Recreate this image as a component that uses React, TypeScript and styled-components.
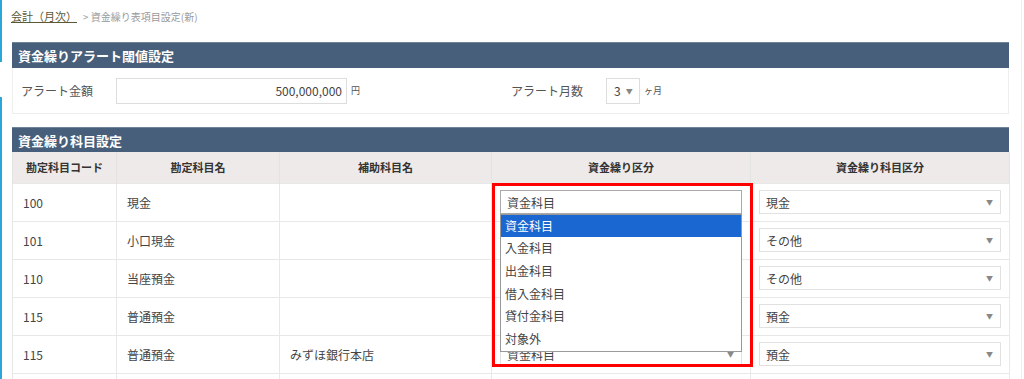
import React from "react";
import styled, { createGlobalStyle } from "styled-components";

const Global = createGlobalStyle`
  html, body { margin: 0; padding: 0; background: #fff; }
  body {
    font-family: "Noto Sans CJK JP", "Noto Sans", sans-serif;
    color: #444;
    font-size: 12px;
  }
  * { box-sizing: border-box; }
`;

const Page = styled.div`
  display: flex;
  width: 1024px;
  height: 379px;
  overflow: hidden;
`;

const Rail = styled.div`
  width: 2px;
  display: flex;
  flex-direction: column;
  flex: none;
`;

const RailSeg = styled.div<{ $h: number; $on: boolean }>`
  height: ${(p) => p.$h}px;
  background: ${(p) => (p.$on ? "#2aa6d8" : "transparent")};
`;

const Main = styled.div`
  width: 1007px;
  padding-left: 10px;
  flex: none;
`;

const Edge = styled.div`
  width: 13px;
  flex: none;
  border-right: 1px solid #eeeeee;
  margin-right: 2px;
`;

const Breadcrumb = styled.div`
  height: 42px;
  padding-top: 8px;
  font-size: 10px;
  color: #9a9a9a;
  display: flex;
  gap: 6px;
  align-items: baseline;
`;

const Crumb = styled.a`
  color: #5b5836;
  font-size: 11px;
  text-decoration: underline;
  margin-left: -1px;
`;

const Panel = styled.section<{ $mb?: number }>`
  width: 997px;
  margin-bottom: ${(p) => p.$mb ?? 0}px;
`;

const PanelHead = styled.div<{ $h: number }>`
  height: ${(p) => p.$h}px;
  background: #475f7a;
  border-top: 1px solid #6f8399;
  color: #fff;
  font-weight: bold;
  font-size: 13px;
  display: flex;
  align-items: center;
  padding-left: 6px;
`;

const PanelBody = styled.div`
  height: 46px;
  border: 1px solid #eeeeee;
  border-top: none;
  display: flex;
  align-items: center;
`;

const FieldLabel = styled.span<{ $w: number; $ml: number }>`
  width: ${(p) => p.$w}px;
  margin-left: ${(p) => p.$ml}px;
  font-size: 12px;
  color: #555;
  flex: none;
`;

const AmountInput = styled.div`
  width: 231px;
  height: 26px;
  border: 1px solid #dddddd;
  text-align: right;
  padding-right: 4px;
  line-height: 24px;
  font-size: 12px;
  color: #444;
  flex: none;
`;

const Unit = styled.span<{ $w?: number }>`
  font-size: 9px;
  color: #555;
  margin-left: 4px;
  width: ${(p) => (p.$w ? `${p.$w}px` : "auto")};
  flex: none;
`;

const MonthSelect = styled.div`
  width: 34px;
  height: 26px;
  border: 1px solid #dddddd;
  display: flex;
  align-items: center;
  padding-left: 7px;
  gap: 5px;
  font-size: 12px;
  color: #444;
  flex: none;
`;

const Arrow = styled.span`
  font-size: 7px;
  color: #888;
`;

const TableWrap = styled.div`
  position: relative;
`;

const Table = styled.table`
  width: 997px;
  border-collapse: collapse;
  table-layout: fixed;
`;

const Th = styled.th`
  height: 31px;
  background: #eeeae9;
  font-size: 11px;
  font-weight: bold;
  color: #333;
  border-left: 1px solid #e3e3e3;
  border-right: 1px solid #e3e3e3;
  text-align: center;
  padding: 0;
`;

const Td = styled.td`
  height: 38px;
  border: 1px solid #e8e8e8;
  padding: 0 10px;
  font-size: 12px;
  color: #444;
  white-space: nowrap;
  position: relative;
`;

const SelCell = styled.td`
  height: 38px;
  border: 1px solid #e8e8e8;
  padding: 0 8px;
  position: relative;
`;

const Select = styled.div<{ $open?: boolean }>`
  height: 24px;
  border: 1px solid ${(p) => (p.$open ? "#a9a9a9" : "#e1e1e1")};
  display: flex;
  align-items: center;
  justify-content: space-between;
  padding: 0 7px 0 6px;
  font-size: 12px;
  color: #444;
  background: #fff;
`;

const ListBox = styled.ul`
  position: absolute;
  left: 8px;
  right: 8px;
  top: 30px;
  margin: 0;
  padding: 0;
  list-style: none;
  border: 1px solid #999;
  background: #fff;
  z-index: 2;
`;

const Option = styled.li<{ $active?: boolean }>`
  height: 22.7px;
  line-height: 22.7px;
  padding-left: 4px;
  font-size: 12px;
  color: ${(p) => (p.$active ? "#fff" : "#444")};
  background: ${(p) => (p.$active ? "#1b67d1" : "#fff")};
`;

const Highlight = styled.div`
  position: absolute;
  left: 0;
  top: -1px;
  width: 261px;
  height: 184px;
  border: 3px solid #ff0000;
  z-index: 3;
  pointer-events: none;
`;

type Row = { code: string; name: string; sub: string; kind: string; cat: string };

const rows: Row[] = [
  { code: "100", name: "現金", sub: "", kind: "資金科目", cat: "現金" },
  { code: "101", name: "小口現金", sub: "", kind: "資金科目", cat: "その他" },
  { code: "110", name: "当座預金", sub: "", kind: "資金科目", cat: "その他" },
  { code: "115", name: "普通預金", sub: "", kind: "資金科目", cat: "預金" },
  { code: "115", name: "普通預金", sub: "みずほ銀行本店", kind: "資金科目", cat: "預金" },
  { code: "", name: "", sub: "", kind: "", cat: "" },
];

const options = ["資金科目", "入金科目", "出金科目", "借入金科目", "貸付金科目", "対象外"];

export default function App() {
  return (
    <>
      <Global />
      <Page>
        <Rail>
          <RailSeg $h={62} $on />
          <RailSeg $h={35} $on={false} />
          <RailSeg $h={282} $on />
        </Rail>
        <Main>
          <Breadcrumb>
            <Crumb>会計（月次）</Crumb>
            <span>&gt; 資金繰り表項目設定(新)</span>
          </Breadcrumb>
          <Panel $mb={13}>
            <PanelHead $h={26}>資金繰りアラート閾値設定</PanelHead>
            <PanelBody>
              <FieldLabel $w={95} $ml={8}>アラート金額</FieldLabel>
              <AmountInput>500,000,000</AmountInput>
              <Unit $w={160}>円</Unit>
              <FieldLabel $w={95} $ml={0}>アラート月数</FieldLabel>
              <MonthSelect>
                3 <Arrow>▼</Arrow>
              </MonthSelect>
              <Unit>ヶ月</Unit>
            </PanelBody>
          </Panel>
          <Panel>
            <PanelHead $h={25}>資金繰り科目設定</PanelHead>
            <TableWrap>
              <Table>
                <colgroup>
                  <col style={{ width: 104 }} />
                  <col style={{ width: 163 }} />
                  <col style={{ width: 212 }} />
                  <col style={{ width: 259 }} />
                  <col style={{ width: 259 }} />
                </colgroup>
                <thead>
                  <tr>
                    <Th>勘定科目コード</Th>
                    <Th>勘定科目名</Th>
                    <Th>補助科目名</Th>
                    <Th>資金繰り区分</Th>
                    <Th>資金繰り科目区分</Th>
                  </tr>
                </thead>
                <tbody>
                  {rows.map((r, i) => (
                    <tr key={i}>
                      <Td>{r.code}</Td>
                      <Td>{r.name}</Td>
                      <Td>{r.sub}</Td>
                      <SelCell>
                        {i === 0 ? (
                          <>
                            <Select $open>{r.kind}</Select>
                            <ListBox>
                              {options.map((o, j) => (
                                <Option key={o} $active={j === 0}>
                                  {o}
                                </Option>
                              ))}
                            </ListBox>
                            <Highlight />
                          </>
                        ) : r.kind ? (
                          <Select>
                            {r.kind}
                            <Arrow>▼</Arrow>
                          </Select>
                        ) : null}
                      </SelCell>
                      <SelCell>
                        {r.cat ? (
                          <Select>
                            {r.cat}
                            <Arrow>▼</Arrow>
                          </Select>
                        ) : null}
                      </SelCell>
                    </tr>
                  ))}
                </tbody>
              </Table>
            </TableWrap>
          </Panel>
        </Main>
        <Edge />
      </Page>
    </>
  );
}
